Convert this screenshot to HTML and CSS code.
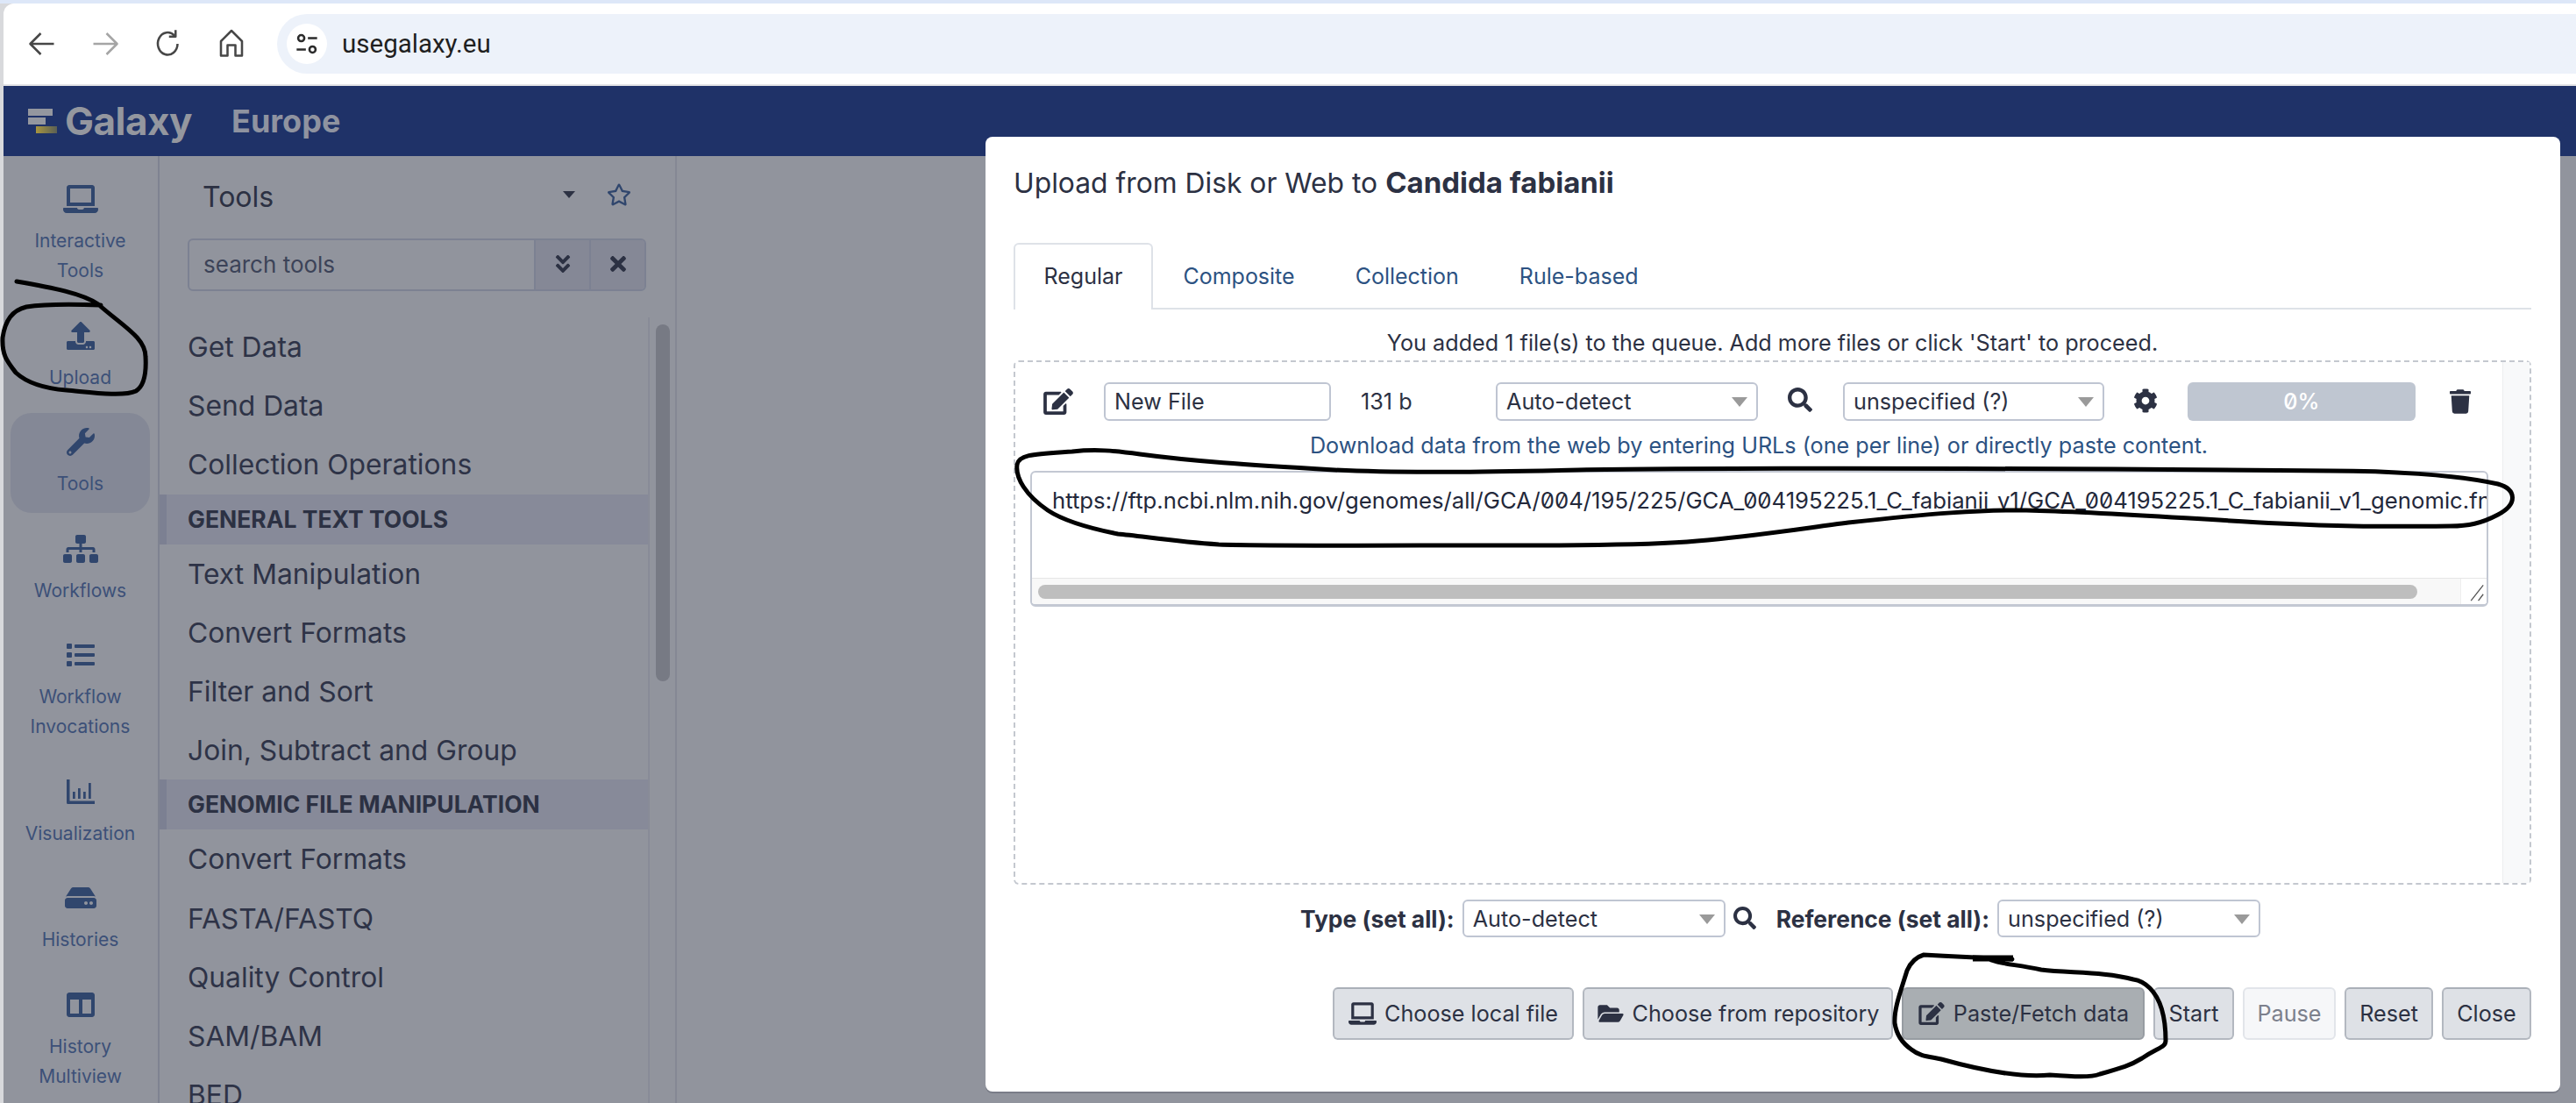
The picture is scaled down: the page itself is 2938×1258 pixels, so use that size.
FILE: index.html
```html
<!DOCTYPE html>
<html lang="en">
<head>
<meta charset="utf-8">
<title>Galaxy Europe</title>
<link rel="stylesheet" href="styles.css">
</head>
<body>
<svg class="sprite" xmlns="http://www.w3.org/2000/svg">
<symbol id="i-laptop" viewBox="0 0 640 512"><path d="M624 416H381.54c-.74 19.81-14.71 32-32.74 32H288c-18.69 0-33.02-17.47-32.77-32H16c-8.8 0-16 7.2-16 16v16c0 35.2 28.8 64 64 64h512c35.2 0 64-28.8 64-64v-16c0-8.8-7.2-16-16-16zM576 48c0-26.4-21.6-48-48-48H112C85.6 0 64 21.6 64 48v336h512V48zm-64 272H128V64h384v256z"/></symbol>
<symbol id="i-upload" viewBox="0 0 512 512"><path d="M296 384h-80c-13.3 0-24-10.7-24-24V192h-87.7c-17.8 0-26.7-21.5-14.1-34.1L242.3 5.7c7.5-7.5 19.8-7.5 27.3 0l152.2 152.2c12.6 12.6 3.7 34.1-14.1 34.1H320v168c0 13.3-10.7 24-24 24zm216-8v112c0 13.3-10.7 24-24 24H24c-13.3 0-24-10.7-24-24V376c0-13.3 10.7-24 24-24h136v8c0 30.9 25.1 56 56 56h80c30.9 0 56-25.1 56-56v-8h136c13.3 0 24 10.7 24 24zm-124 88c0-11-9-20-20-20s-20 9-20 20 9 20 20 20 20-9 20-20zm64 0c0-11-9-20-20-20s-20 9-20 20 9 20 20 20 20-9 20-20z"/></symbol>
<symbol id="i-wrench" viewBox="0 0 512 512"><path d="M507.73 109.1c-2.24-9.03-13.54-12.09-20.12-5.51l-74.36 74.36-67.88-11.31-11.31-67.88 74.36-74.36c6.62-6.62 3.43-17.9-5.66-20.16-47.38-11.74-99.55.91-136.58 37.93-39.64 39.64-50.55 97.1-34.05 147.2L18.74 402.76c-24.99 24.99-24.99 65.51 0 90.5 24.99 24.99 65.51 24.99 90.5 0l213.21-213.21c50.12 16.71 107.47 5.68 147.37-34.22 37.07-37.07 49.7-89.32 37.91-136.73zM64 472c-13.25 0-24-10.75-24-24 0-13.26 10.75-24 24-24s24 10.74 24 24c0 13.25-10.75 24-24 24z"/></symbol>
<symbol id="i-sitemap" viewBox="0 0 640 512"><path d="M128 352H32c-17.67 0-32 14.33-32 32v96c0 17.67 14.33 32 32 32h96c17.67 0 32-14.33 32-32v-96c0-17.67-14.33-32-32-32zm-24-80h192v48h48v-48h192v48h48v-57.59c0-21.17-17.23-38.41-38.41-38.41H344v-64h40c17.67 0 32-14.33 32-32V32c0-17.67-14.33-32-32-32H256c-17.67 0-32 14.33-32 32v96c0 17.67 14.33 32 32 32h40v64H94.41C73.23 224 56 241.23 56 262.41V320h48v-48zm264 80h-96c-17.67 0-32 14.33-32 32v96c0 17.67 14.33 32 32 32h96c17.67 0 32-14.33 32-32v-96c0-17.67-14.33-32-32-32zm240 0h-96c-17.67 0-32 14.33-32 32v96c0 17.67 14.33 32 32 32h96c17.67 0 32-14.33 32-32v-96c0-17.67-14.33-32-32-32z"/></symbol>
<symbol id="i-list" viewBox="0 0 512 512"><path d="M16 48h64a16 16 0 0 1 16 16v64a16 16 0 0 1-16 16H16a16 16 0 0 1-16-16V64a16 16 0 0 1 16-16zm0 160h64a16 16 0 0 1 16 16v64a16 16 0 0 1-16 16H16a16 16 0 0 1-16-16v-64a16 16 0 0 1 16-16zm0 160h64a16 16 0 0 1 16 16v64a16 16 0 0 1-16 16H16a16 16 0 0 1-16-16v-64a16 16 0 0 1 16-16zM160 64h336a16 16 0 0 1 16 16v32a16 16 0 0 1-16 16H160a16 16 0 0 1-16-16V80a16 16 0 0 1 16-16zm0 160h336a16 16 0 0 1 16 16v32a16 16 0 0 1-16 16H160a16 16 0 0 1-16-16v-32a16 16 0 0 1 16-16zm0 160h336a16 16 0 0 1 16 16v32a16 16 0 0 1-16 16H160a16 16 0 0 1-16-16v-32a16 16 0 0 1 16-16z"/></symbol>
<symbol id="i-chart" viewBox="0 0 512 512"><path d="M0 32h56v392h456v56H24a24 24 0 0 1-24-24zM112 256h44v128h-44zM208 192h44v192h-44zM304 256h44v128h-44zM400 96h44v288h-44z"/></symbol>
<symbol id="i-hdd" viewBox="0 0 576 512"><path d="M576 304v96c0 26.51-21.49 48-48 48H48c-26.51 0-48-21.49-48-48v-96c0-26.51 21.49-48 48-48h480c26.51 0 48 21.49 48 48zm-48-80a79.557 79.557 0 0 1 30.777 6.165L462.25 85.374A48.003 48.003 0 0 0 422.311 64H153.689a48 48 0 0 0-39.938 21.374L17.223 230.165A79.557 79.557 0 0 1 48 224h480zm-48 96c-17.673 0-32 14.327-32 32s14.327 32 32 32 32-14.327 32-32-14.327-32-32-32zm-96 0c-17.673 0-32 14.327-32 32s14.327 32 32 32 32-14.327 32-32-14.327-32-32-32z"/></symbol>
<symbol id="i-columns" viewBox="0 0 512 512"><path d="M464 32H48C21.49 32 0 53.49 0 80v352c0 26.51 21.49 48 48 48h416c26.51 0 48-21.49 48-48V80c0-26.51-21.49-48-48-48zM224 416H64V160h160v256zm224 0H288V160h160v256z"/></symbol>
<symbol id="i-search" viewBox="0 0 512 512"><path d="M505 442.7L405.3 343c-4.5-4.5-10.6-7-17-7H372c27.6-35.3 44-79.7 44-128C416 93.1 322.9 0 208 0S0 93.1 0 208s93.1 208 208 208c48.3 0 92.7-16.4 128-44v16.3c0 6.4 2.5 12.5 7 17l99.7 99.7c9.4 9.4 24.6 9.4 33.9 0l28.3-28.3c9.4-9.4 9.4-24.6.1-34zM208 336c-70.7 0-128-57.2-128-128 0-70.7 57.2-128 128-128 70.7 0 128 57.2 128 128 0 70.7-57.2 128-128 128z"/></symbol>
<symbol id="i-edit" viewBox="0 0 576 512"><path d="M402.6 83.2l90.2 90.2c3.8 3.8 3.8 10 0 13.8L274.4 405.6l-92.8 10.3c-12.4 1.4-22.9-9.1-21.5-21.5l10.3-92.8L388.8 83.2c3.8-3.8 10-3.8 13.8 0zm162-22.9l-48.8-48.8c-15.2-15.2-39.9-15.2-55.2 0l-35.4 35.4c-3.8 3.8-3.8 10 0 13.8l90.2 90.2c3.8 3.8 10 3.8 13.8 0l35.4-35.4c15.2-15.3 15.2-40 0-55.2zM384 346.2V448H64V128h229.8c3.2 0 6.2-1.3 8.5-3.5l40-40c7.6-7.6 2.2-20.5-8.5-20.5H48C21.5 64 0 85.5 0 112v352c0 26.5 21.5 48 48 48h352c26.5 0 48-21.5 48-48V306.2c0-10.7-12.9-16-20.5-8.5l-40 40c-2.2 2.3-3.5 5.3-3.5 8.5z"/></symbol>
<symbol id="i-cog" viewBox="0 0 512 512"><path d="M487.4 315.7l-42.6-24.6c4.3-23.2 4.3-47 0-70.2l42.6-24.6c4.9-2.8 7.1-8.6 5.5-14-11.1-35.6-30-67.8-54.7-94.6-3.8-4.1-10-5.1-14.8-2.3L380.8 110c-17.9-15.4-38.5-27.3-60.8-35.1V25.8c0-5.6-3.9-10.5-9.4-11.7-36.7-8.2-74.3-7.8-109.2 0-5.5 1.2-9.4 6.1-9.4 11.7V75c-22.2 7.9-42.8 19.8-60.8 35.1L88.7 85.5c-4.9-2.8-11-1.9-14.8 2.3-24.7 26.7-43.6 58.9-54.7 94.6-1.7 5.4.6 11.2 5.5 14L67.3 221c-4.3 23.2-4.3 47 0 70.2l-42.6 24.6c-4.9 2.8-7.1 8.6-5.5 14 11.1 35.6 30 67.8 54.7 94.6 3.8 4.1 10 5.1 14.8 2.3l42.6-24.6c17.9 15.4 38.5 27.3 60.8 35.1v49.2c0 5.6 3.9 10.5 9.4 11.7 36.7 8.2 74.3 7.8 109.2 0 5.5-1.2 9.4-6.1 9.4-11.7v-49.2c22.2-7.9 42.8-19.8 60.8-35.1l42.6 24.6c4.9 2.8 11 1.9 14.8-2.3 24.7-26.7 43.6-58.9 54.7-94.6 1.5-5.5-.7-11.3-5.6-14.1zM256 336c-44.1 0-80-35.9-80-80s35.9-80 80-80 80 35.9 80 80-35.9 80-80 80z"/></symbol>
<symbol id="i-trash" viewBox="0 0 448 512"><path d="M432 32H312l-9.4-18.7A24 24 0 0 0 281.1 0H166.8a23.72 23.72 0 0 0-21.4 13.3L136 32H16A16 16 0 0 0 0 48v32a16 16 0 0 0 16 16h416a16 16 0 0 0 16-16V48a16 16 0 0 0-16-16zM53.2 467a48 48 0 0 0 47.9 45h245.8a48 48 0 0 0 47.9-45L416 128H32z"/></symbol>
<symbol id="i-folder" viewBox="0 0 576 512"><path d="M572.694 292.093L500.27 416.248A63.997 63.997 0 0 1 444.989 448H45.025c-18.523 0-30.064-20.093-20.731-36.093l72.424-124.155A64 64 0 0 1 152 256h399.964c18.523 0 30.064 20.093 20.73 36.093zM152 224h328v-48c0-26.51-21.49-48-48-48H272l-64-64H48C21.49 64 0 85.49 0 112v278.046l69.077-118.418C86.214 242.25 117.989 224 152 224z"/></symbol>
<symbol id="i-dbl" viewBox="0 0 320 512"><path d="M143 256.3L7 120.3c-9.4-9.4-9.4-24.6 0-33.9l22.6-22.6c9.4-9.4 24.6-9.4 33.9 0l96.4 96.4 96.4-96.4c9.4-9.4 24.6-9.4 33.9 0L313 86.3c9.4 9.4 9.4 24.6 0 33.9l-136 136c-9.4 9.5-24.6 9.5-34 .1zm34 192l136-136c9.4-9.4 9.4-24.6 0-33.9l-22.6-22.6c-9.4-9.4-24.6-9.4-33.9 0L160 352.1l-96.4-96.4c-9.4-9.4-24.6-9.4-33.9 0L7 278.3c-9.4 9.4-9.4 24.6 0 33.9l136 136c9.4 9.5 24.6 9.5 34 .1z"/></symbol>
<symbol id="i-times" viewBox="0 0 352 512"><path d="M242.72 256l100.07-100.07c12.28-12.28 12.28-32.19 0-44.48l-22.24-22.24c-12.28-12.28-32.19-12.28-44.48 0L176 189.28 75.93 89.21c-12.28-12.28-32.19-12.28-44.48 0L9.21 111.45c-12.28 12.28-12.28 32.19 0 44.48L109.28 256 9.21 356.07c-12.28 12.28-12.28 32.19 0 44.48l22.24 22.24c12.28 12.28 32.2 12.28 44.48 0L176 322.72l100.07 100.07c12.28 12.28 32.2 12.28 44.48 0l22.24-22.24c12.28-12.28 12.28-32.19 0-44.48L242.72 256z"/></symbol>
<symbol id="i-star" viewBox="0 0 576 512"><path d="M528.1 171.5L382 150.2 316.7 17.8c-11.7-23.6-45.6-23.9-57.4 0L194 150.2 47.9 171.4c-26.2 3.8-36.7 36.1-17.7 54.6l105.7 103-25 145.5c-4.5 26.3 23.2 46 46.4 33.7L288 439.6l130.7 68.7c23.2 12.2 50.9-7.4 46.4-33.7l-25-145.5 105.7-103c19-18.5 8.5-50.8-17.7-54.6zM388.6 312.3l23.7 138.4L288 385.4l-124.3 65.3 23.7-138.4-100.6-98 139-20.2 62.2-126 62.2 126 139 20.2-100.6 98z"/></symbol>
</svg>

<div class="page">
  <div class="topstrip"></div>
  <header class="toolbar">
    <div class="navs">
      <svg class="nav" viewBox="0 0 24 24"><path d="M21 12H4M11 4l-8 8 8 8"/></svg>
      <svg class="nav nav-off" viewBox="0 0 24 24"><path d="M3 12h17M13 4l8 8-8 8"/></svg>
      <svg class="nav" viewBox="0 0 24 24"><path d="M19 12a7.5 8.5 0 1 1-2.4-6.4M17.5 1.5v5h-5"/></svg>
      <svg class="nav" viewBox="0 0 24 24"><path d="M4 21V10l8-8 8 8v11h-5v-8H9v8z"/></svg>
    </div>
    <div class="address">
      <span class="site-info">
        <svg class="tune" viewBox="0 0 24 24"><circle cx="6.5" cy="6.5" r="3"/><path d="M13 6.500h9M2 17.500h9"/><circle cx="17.500" cy="17.500" r="3"/></svg>
      </span>
      <span class="url">usegalaxy.eu</span>
    </div>
  </header>
  <div class="masthead">
    <div class="logo"><i class="bar bar1"></i><i class="bar bar2"></i><i class="bar bar3"></i></div>
    <span class="brand">Galaxy</span>
    <span class="brand-sub">Europe</span>
  </div>
  <div class="main">
    <nav class="activity">
      <a class="act"><svg class="act-icon"><use href="#i-laptop"/></svg><span class="act-label">Interactive<br>Tools</span></a>
      <a class="act"><svg class="act-icon"><use href="#i-upload"/></svg><span class="act-label">Upload</span></a>
      <a class="act act-on"><svg class="act-icon"><use href="#i-wrench"/></svg><span class="act-label">Tools</span></a>
      <a class="act"><svg class="act-icon"><use href="#i-sitemap"/></svg><span class="act-label">Workflows</span></a>
      <a class="act"><svg class="act-icon"><use href="#i-list"/></svg><span class="act-label">Workflow<br>Invocations</span></a>
      <a class="act"><svg class="act-icon"><use href="#i-chart"/></svg><span class="act-label">Visualization</span></a>
      <a class="act"><svg class="act-icon"><use href="#i-hdd"/></svg><span class="act-label">Histories</span></a>
      <a class="act"><svg class="act-icon"><use href="#i-columns"/></svg><span class="act-label">History<br>Multiview</span></a>
    </nav>
    <aside class="panel">
      <div class="panel-head">
        <span class="panel-title">Tools</span>
        <span class="panel-caret"></span>
        <svg class="panel-star"><use href="#i-star"/></svg>
      </div>
      <div class="search">
        <span class="search-text">search tools</span>
        <span class="search-btn"><svg class="sb-icon"><use href="#i-dbl"/></svg></span>
        <span class="search-btn"><svg class="sb-icon"><use href="#i-times"/></svg></span>
      </div>
      <div class="tool-area">
        <div class="tool-list">
          <div class="tool">Get Data</div>
          <div class="tool">Send Data</div>
          <div class="tool">Collection Operations</div>
          <div class="section">GENERAL TEXT TOOLS</div>
          <div class="tool">Text Manipulation</div>
          <div class="tool">Convert Formats</div>
          <div class="tool">Filter and Sort</div>
          <div class="tool">Join, Subtract and Group</div>
          <div class="section">GENOMIC FILE MANIPULATION</div>
          <div class="tool">Convert Formats</div>
          <div class="tool">FASTA/FASTQ</div>
          <div class="tool">Quality Control</div>
          <div class="tool">SAM/BAM</div>
          <div class="tool">BED</div>
        </div>
        <div class="rail"><div class="thumb"></div></div>
      </div>
    </aside>
  </div>

  <section class="modal">
    <h1 class="modal-title">Upload from Disk or Web to <b class="modal-target">Candida fabianii</b></h1>
    <div class="tabs">
      <span class="tab tab-on">Regular</span>
      <span class="tab">Composite</span>
      <span class="tab">Collection</span>
      <span class="tab">Rule-based</span>
    </div>
    <p class="queue-msg">You added 1 file(s) to the queue. Add more files or click 'Start' to proceed.</p>
    <div class="dropbox">
      <div class="box-main">
        <div class="file-row">
          <svg class="ic ic-edit"><use href="#i-edit"/></svg>
          <span class="field f-name">New File</span>
          <span class="f-size">131 b</span>
          <span class="field sel f-sel">Auto-detect</span>
          <svg class="ic ic-search"><use href="#i-search"/></svg>
          <span class="field sel f-sel2">unspecified (?)</span>
          <svg class="ic ic-cog"><use href="#i-cog"/></svg>
          <span class="progress">0%</span>
          <svg class="ic ic-trash"><use href="#i-trash"/></svg>
        </div>
        <p class="hint">Download data from the web by entering URLs (one per line) or directly paste content.</p>
        <div class="paste">
          <div class="paste-text">https://ftp.ncbi.nlm.nih.gov/genomes/all/GCA/004/195/225/GCA_004195225.1_C_fabianii_v1/GCA_004195225.1_C_fabianii_v1_genomic.fna.gz</div>
          <div class="paste-bar">
            <div class="paste-track"><div class="paste-thumb"></div></div>
            <div class="resizer"><svg class="resizer-ic" viewBox="0 0 30 30"><path d="M12 27 27 8M21 27l6-8"/></svg></div>
          </div>
        </div>
      </div>
      <div class="box-gutter"></div>
    </div>
    <div class="setall">
      <b class="sa-label">Type (set all):</b>
      <span class="field sel sa-sel">Auto-detect</span>
      <svg class="ic sa-search"><use href="#i-search"/></svg>
      <b class="sa-label sa-ref">Reference (set all):</b>
      <span class="field sel sa-sel">unspecified (?)</span>
    </div>
    <div class="actions">
      <span class="btn b-local"><svg class="btn-ic"><use href="#i-laptop"/></svg>Choose local file</span>
      <span class="btn b-repo"><svg class="btn-ic"><use href="#i-folder"/></svg>Choose from repository</span>
      <span class="btn b-paste"><svg class="btn-ic"><use href="#i-edit"/></svg>Paste/Fetch data</span>
      <span class="btn b-start">Start</span>
      <span class="btn b-pause">Pause</span>
      <span class="btn b-reset">Reset</span>
      <span class="btn b-close">Close</span>
    </div>
  </section>

  <svg class="scribbles" xmlns="http://www.w3.org/2000/svg">
    <path d="M19 321C60 328 95 335 112 347C140 372 166 385 166 407C167 425 165 440 155 446C140 453 100 447 76 445C50 443 30 436 18 425C8 412 2 405 3 385C6 365 14 354 30 350C55 346 90 347 115 348"/>
    <path d="M1223 515C1250 512 1270 514 1300 518C1360 526 1420 530 1522 536C1600 540 1700 538 1800 536C1900 534 2200 533 2658 537C2720 537 2800 541 2849 552C2870 558 2872 575 2849 587C2830 597 2815 600 2795 600C2700 601 2660 600 2600 597C2500 592 2400 584 2311 582C2260 581 2200 586 2108 596C2060 602 2000 612 1924 618C1850 623 1750 622 1694 622C1600 622 1450 623 1390 621C1340 618 1300 611 1275 609C1240 602 1210 592 1195 582C1170 565 1158 545 1160 530C1162 518 1180 518 1223 515"/>
    <path d="M2295 1094C2270 1093 2230 1091 2194 1089C2184 1092 2178 1100 2175 1107C2168 1130 2160 1150 2161 1167C2163 1180 2170 1190 2180 1197C2190 1205 2200 1205 2214 1208C2250 1218 2300 1230 2338 1226C2365 1228 2385 1229 2395 1225C2420 1218 2430 1215 2443 1207C2460 1195 2470 1195 2470 1187C2470 1160 2465 1140 2452 1127C2445 1120 2440 1118 2433 1117C2400 1108 2360 1110 2328 1106C2300 1100 2285 1100 2271 1095"/>
    <path class="scribble-thick" d="M2250 1093H2296"/>
  </svg>
</div>
</body>
</html>
```

FILE: styles.css
```css
* { box-sizing: border-box; }
html, body { margin: 0; height: 100%; overflow: hidden; }
body {
  background: #d8d9dc;
  color: #2c3143;
  font-family: "Inter", "Liberation Sans", sans-serif;
  font-variant-numeric: slashed-zero;
  font-feature-settings: "zero" 1;
}
.sprite { display: none; }
.page {
  position: relative;
  display: flex;
  flex-direction: column;
  width: 2938px;
  height: 1258px;
  padding-left: 4px;
  overflow: hidden;
}

/* browser chrome */
.topstrip { height: 4px; margin-left: -4px; background: #dde7f8; flex: none; }
.toolbar {
  flex: none;
  height: 94px;
  display: flex;
  align-items: flex-start;
  padding: 12px 0 0 0;
  background: #fff;
  border-top-left-radius: 12px;
  border-bottom: 2px solid #e4e4e6;
}
.navs { display: flex; gap: 36px; padding: 16px 0 0 26px; width: 312px; flex: none; }
.nav { width: 36px; height: 36px; fill: none; stroke: #474747; stroke-width: 1.7; stroke-linejoin: round; }
.nav-off { stroke: #a5a5a5; }
.address {
  flex: 1;
  height: 68px;
  display: flex;
  align-items: center;
  gap: 17px;
  padding-left: 11px;
  border-radius: 34px 0 0 34px;
  background: #edf2fa;
}
.site-info {
  width: 46px;
  height: 46px;
  border-radius: 50%;
  background: #fff;
  display: flex;
  align-items: center;
  justify-content: center;
  flex: none;
}
.tune { width: 28px; height: 28px; fill: none; stroke: #2b2b2b; stroke-width: 2.2; }
.url { font-family: "Roboto", "Liberation Sans", sans-serif; font-size: 29.5px; color: #1f1f1f; }

/* masthead */
.masthead {
  flex: none;
  height: 80px;
  background: #1f3268;
  display: flex;
  align-items: center;
  padding-left: 28px;
}
.logo { width: 34px; height: 28px; display: flex; flex-direction: column; gap: 2px; margin-right: 8px; flex: none; }
.bar { display: block; height: 8px; }
.bar1 { width: 28px; background: #94979f; }
.bar2 { width: 20px; background: #94979f; }
.bar3 { width: 24px; margin-left: 9px; background: linear-gradient(90deg, #a8953f, #5a5f55); }
.brand { font-size: 44px; font-weight: 700; color: #94979f; letter-spacing: -0.5px; }
.brand-sub { font-size: 36px; font-weight: 700; color: #8f93a0; margin-left: 45px; }

/* body */
.main { flex: 1; min-height: 0; display: flex; background: #91949d; }
.activity {
  width: 178px;
  flex: none;
  display: flex;
  flex-direction: column;
  gap: 7.500px;
  padding: 16px 9px 0 8px;
  border-right: 2px solid #7f8391;
}
.act {
  display: flex;
  flex-direction: column;
  align-items: center;
  padding: 17px 0 16px;
  border-radius: 24px;
  color: #3c5078;
  flex: none;
}
.act-on { background: #848896; }
.act-icon { width: 40px; height: 32px; fill: #30466d; flex: none; }
.act-label { margin-top: 15px; font-size: 21px; line-height: 34px; text-align: center; }

.panel {
  width: 590px;
  flex: none;
  display: flex;
  flex-direction: column;
  border-right: 2px solid #858894;
}
.panel-head { height: 94px; flex: none; display: flex; align-items: center; padding: 0 0 2px 49px; }
.panel-title { font-size: 32px; font-weight: 400; color: #2c3143; width: 407px; }
.panel-caret {
  width: 0; height: 0;
  border-left: 7px solid transparent;
  border-right: 7px solid transparent;
  border-top: 8px solid #2c3143;
  margin-left: 4px;
  margin-top: -4px;
}
.panel-star { width: 28px; height: 26px; fill: #30466d; margin-left: 36px; margin-top: -4px; }

.search {
  flex: none;
  display: flex;
  width: 523px;
  height: 60px;
  margin-left: 32px;
  border: 2px solid #7c8192;
  border-radius: 6px;
  overflow: hidden;
}
.search-text { flex: 1; padding: 0 16px; line-height: 56px; font-size: 26px; color: #3c4358; }
.search-btn {
  width: 63px;
  flex: none;
  display: flex;
  align-items: center;
  justify-content: center;
  background: #858896;
  border-left: 2px solid #7c8192;
}
.sb-icon { width: 18px; height: 26px; fill: #2c3143; margin-top: -2px; }

.tool-area { flex: 1; min-height: 0; display: flex; margin-top: 30px; }
.tool-list { width: 559px; flex: none; border-right: 2px solid #888b97; overflow: hidden; }
.tool { height: 67.2px; line-height: 67.2px; padding-left: 32px; font-size: 31.8px; color: #2e3347; white-space: nowrap; }
.section {
  height: 57px;
  line-height: 57px;
  padding-left: 24px;
  border-left: 8px solid #7c8092;
  background: #878a99;
  font-size: 26.5px;
  font-weight: 700;
  color: #2c3143;
  white-space: nowrap;
}
.rail { flex: 1; padding: 8px 0 0 7px; }
.thumb { width: 16px; height: 407px; border-radius: 8px; background: #777a84; }

/* modal */
.modal {
  position: absolute;
  left: 1124px;
  top: 156px;
  width: 1796px;
  height: 1089px;
  padding: 32px 33px 0 32px;
  background: #fff;
  border-radius: 8px;
  box-shadow: 0 2px 0 #7a7d88;
  display: flex;
  flex-direction: column;
  font-size: 25.2px;
  color: #2c3143;
}
.modal-title { margin: 0; height: 40px; line-height: 40px; font-size: 31.8px; font-weight: 400; flex: none; }
.modal-target { font-size: 33px; }
.tabs {
  display: flex;
  height: 76px;
  margin-top: 49px;
  border-bottom: 2px solid #dee2e8;
  font-size: 25px;
  flex: none;
}
.tab { padding: 0 32.500px; line-height: 73px; color: #2c5282; margin-bottom: -2px; border: 2px solid transparent; border-bottom: 0; }
.tab-on { color: #2c3143; background: #fff; border-color: #dee2e8; border-radius: 6px 6px 0 0; }
.queue-msg { margin: 19px 0 1px; height: 38px; line-height: 38px; text-align: center; flex: none; }
.dropbox {
  flex: none;
  height: 598px;
  display: flex;
  border: 2px dashed #c4c8cf;
  border-radius: 6px;
}
.box-main { flex: 1; min-width: 0; }
.box-gutter { width: 31px; flex: none; background: #f8f9fa; border-left: 1px solid #eceef0; }
.file-row { display: flex; align-items: center; height: 44px; margin-top: 23px; padding-left: 32px; }
.ic { fill: #2c3143; flex: none; }
.ic-edit { width: 34px; height: 30px; }
.field {
  display: flex;
  align-items: center;
  height: 44px;
  padding: 0 10px;
  border: 2px solid #bfc5d2;
  border-radius: 6px;
  white-space: nowrap;
  flex: none;
  background: #fff;
}
.sel { position: relative; }
.sel::after {
  content: "";
  position: absolute;
  right: 10px;
  top: 15px;
  border-left: 9px solid transparent;
  border-right: 9px solid transparent;
  border-top: 11px solid #9a9a9a;
}
.f-name { width: 259px; margin-left: 35px; }
.f-size { width: 154px; margin-left: 34px; flex: none; }
.f-sel { width: 299px; }
.ic-search { width: 28px; height: 28px; margin-left: 34px; margin-top: -4px; }
.f-sel2 { width: 298px; margin-left: 35px; }
.ic-cog { width: 28px; height: 28px; margin-left: 33px; margin-top: -2px; }
.progress {
  width: 260px;
  height: 44px;
  margin-left: 34px;
  line-height: 44px;
  text-align: center;
  background: #bfc6d1;
  border-radius: 6px;
  color: #fff;
  font-weight: 500;
  flex: none;
}
.ic-trash { width: 24px; height: 28px; margin-left: 39px; }
.hint { margin: 10px 0 11px; height: 36px; line-height: 36px; text-align: center; color: #2c5282; }
.paste {
  width: 1663px;
  height: 155px;
  margin-left: 17px;
  display: flex;
  flex-direction: column;
  border: 2px solid #c3c8d3;
  border-bottom-width: 3px;
  border-radius: 6px;
  overflow: hidden;
}
.paste-text { flex: 1; padding: 15px 0 0 23px; line-height: 34px; font-size: 25.7px; white-space: nowrap; overflow: hidden; color: #23283a; }
.paste-bar { height: 30px; flex: none; display: flex; background: #f8f8f8; border-top: 1px solid #e6e6e6; }
.paste-track { flex: 1; padding: 7px 0 0 7px; }
.paste-thumb { width: 1573px; height: 16px; border-radius: 8px; background: #bebebe; }
.resizer { width: 30px; flex: none; background: #fff; border-left: 1px solid #eee; }
.resizer-ic { display: block; width: 28px; height: 28px; fill: none; stroke: #555; stroke-width: 1.4; }

.setall { flex: none; display: flex; align-items: center; height: 43px; margin-top: 17px; padding-left: 327px; }
.sa-label { white-space: nowrap; font-size: 26.4px; }
.sa-sel { width: 300px; margin-left: 9px; height: 43px; }
.sa-search { width: 26px; height: 26px; margin-left: 9px; margin-top: -2px; }
.sa-ref { margin-left: 23px; }

.actions { flex: none; display: flex; justify-content: flex-end; gap: 10px; margin-top: 57px; }
.btn {
  display: flex;
  align-items: center;
  justify-content: center;
  height: 60px;
  background: #dee1e6;
  border: 2px solid #b3b8c0;
  border-top-color: #aab0b8;
  border-radius: 6px;
  white-space: nowrap;
  color: #2c3143;
}
.btn-ic { width: 32px; height: 26px; margin-right: 9px; fill: #2c3143; flex: none; }
.b-local { width: 275px; }
.b-repo { width: 354px; }
.b-paste { width: 277px; background: #a9aeb2; border-color: #979ca2; }
.b-start { width: 92px; }
.b-pause { width: 106px; background: #f6f7f9; border-color: #e2e5ea; color: #7c808c; }
.b-reset { width: 101px; }
.b-close { width: 102px; }

/* hand-drawn annotations */
.scribbles { position: absolute; left: 0; top: 0; width: 2938px; height: 1258px; fill: none; stroke: #000; stroke-width: 5; stroke-linecap: round; stroke-linejoin: round; pointer-events: none; }
.scribble-thick { stroke-width: 7; stroke-linecap: butt; }
```
